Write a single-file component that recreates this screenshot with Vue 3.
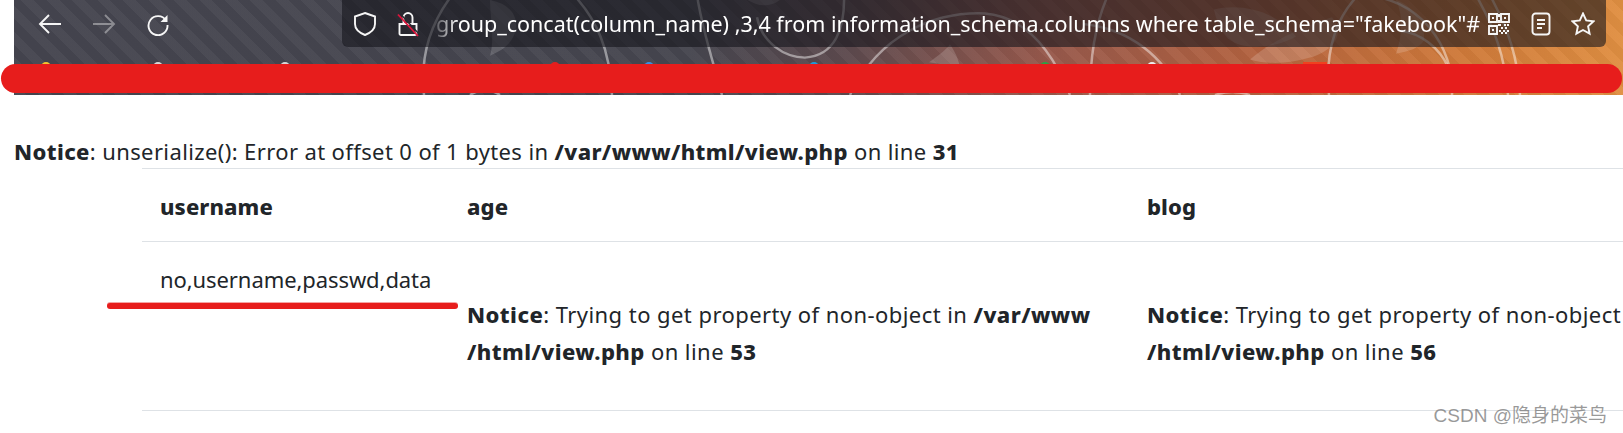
<script setup>
const columns = ['username', 'age', 'blog']
const swirls = [
  'M424 99 C420 60 430 25 452 -5',
  'M470 99 C480 92 490 92 500 99',
  'M574 -5 C596 20 610 50 612 99',
  'M697 -5 C702 30 712 60 722 99',
  'M757 18 C762 45 785 60 805 60 C835 58 845 30 844 -5',
  'M850 99 C880 35 935 12 985 14 C1030 18 1055 60 1070 99',
  'M1090 99 C1090 60 1095 25 1108 -5',
  'M1083 25 C1130 30 1165 60 1180 99',
  'M1329 99 C1325 55 1335 20 1358 -5',
  'M1358 -5 C1420 -5 1455 50 1452 99',
  'M1400 32 C1420 34 1440 50 1448 70',
  'M1490 -5 C1508 30 1518 60 1520 99',
  'M1476 -5 C1495 30 1505 60 1508 99',
  'M1215 99 C1225 95 1240 95 1250 99'
]
const leaves = [
  'M490 0 C505 3 517 12 516 28 C515 42 505 52 490 58 C495 40 490 18 490 0Z',
  'M745 -2 C755 6 770 10 782 -2Z',
  'M929 65 C938 58 946 52 950 46 C955 54 958 60 960 70Z',
  'M1214 10 C1245 2 1280 15 1296 38 C1280 48 1245 55 1228 40 C1220 32 1216 20 1214 10Z',
  'M1250 62 C1275 40 1310 25 1332 18 C1345 35 1335 52 1310 60 C1290 66 1270 68 1250 62Z',
  'M1396 0 C1412 5 1426 25 1424 42 C1420 50 1408 54 1396 56 C1402 38 1404 18 1396 0Z'
]
</script>

<template>
  <div class="page">
    <header class="chrome">
      <svg class="decor" viewBox="0 0 1609 99" preserveAspectRatio="none" aria-hidden="true">
        <g transform="translate(-14 0)">
          <path v-for="(d, i) in leaves" :key="'l' + i" :d="d" fill="#ffffff" fill-opacity="0.16" />
          <path v-for="(d, i) in swirls" :key="'s' + i" :d="d" fill="none" stroke="#ffffff" stroke-opacity="0.45" stroke-width="2.5" />
        </g>
      </svg>
      <nav class="nav">
        <svg class="icon" viewBox="0 0 24 24"><path d="M23 12H2M11 3l-9 9 9 9" /></svg>
        <svg class="icon dim" viewBox="0 0 24 24"><path d="M1 12h21M13 3l9 9-9 9" /></svg>
        <svg class="icon" viewBox="0 0 24 24"><path d="M20 8.500A9.500 9.500 0 1 0 21.500 13" /><path class="solid" d="M21.500 3v7h-7z" /></svg>
      </nav>
      <div class="address">
        <svg class="icon shield" viewBox="0 0 22 24"><path d="M11 1l10 3.500v7.500c0 5-4.500 8.800-10 11-5.500-2.200-10-6-10-11V4.500z" /></svg>
        <svg class="icon lock" viewBox="0 0 20 24">
          <path d="M5.500 12V5.500a4.500 4.500 0 0 1 9 0V12M1.500 12h17v9.500a1.500 1.500 0 0 1-1.500 1.500H3a1.500 1.500 0 0 1-1.500-1.500z" />
          <path class="gap" d="M1.500 1l20 21.500" />
          <path class="slash" d="M0 2.500L20 24" />
        </svg>
        <span class="url">group_concat(column_name) ,3,4 from information_schema.columns where table_schema="fakebook"#</span>
        <div class="tools">
          <svg class="icon qr" viewBox="0 0 24 24">
            <path d="M2 2h8v8H2zM14 2h8v8h-8zM2 14h8v8H2z" />
            <path class="solid" d="M5 5h2v2H5zM17 5h2v2h-2zM5 17h2v2H5zM11 2h2v3h-2zM11 8h2v3h-2zM11 12h3v2h-3zM17 12h2v2h-2zM20 12h2v2h-2zM14 15h2v2h-2zM18 15h2v2h-2zM12 18h2v2h-2zM16 18h2v2h-2zM20 18h2v2h-2zM14 20h2v2h-2zM18 20h2v2h-2z" />
          </svg>
          <svg class="icon doc" viewBox="0 0 24 24"><rect x="3.500" y="1.500" width="17" height="21" rx="3" /><path d="M8 8h8M8 12h8M8 16h5" /></svg>
          <svg class="icon star" viewBox="0 0 24 24"><path d="M12 1.500l3.200 6.900 7.300.9-5.400 5 1.500 7.300L12 18l-6.600 3.600 1.500-7.300-5.400-5 7.300-.9z" /></svg>
        </div>
      </div>
      <div class="bookmarks" aria-hidden="true">
        <i class="peek yellow"></i><i class="peek grey"></i><i class="peek grey2"></i><i class="peek red"></i>
        <i class="peek blue"></i><i class="peek cyan"></i><i class="peek green"></i><i class="peek pale"></i><i class="peek orange"></i>
      </div>
    </header>
    <div class="redact"></div>

    <p class="notice"><b>Notice</b>: unserialize(): Error at offset 0 of 1 bytes in <b>/var/www/html/view.php</b> on line <b>31</b></p>

    <div class="table">
      <div class="row head">
        <div v-for="c in columns" :key="c" class="cell">{{ c }}</div>
      </div>
      <div class="row body">
        <div class="cell first">
          no,username,passwd,data
          <span class="underline"></span>
        </div>
        <div class="cell second">
          <b>Notice</b>: Trying to get property of non-object in <b>/var/www<br />/html/view.php</b> on line <b>53</b>
        </div>
        <div class="cell second">
          <b>Notice</b>: Trying to get property of non-object<br /><b>/html/view.php</b> on line <b>56</b>
        </div>
      </div>
    </div>
    <div class="watermark">CSDN @隐身的菜鸟</div>
  </div>
</template>

<style scoped>
.page {
  position: relative;
  width: 1623px;
  height: 433px;
  overflow: hidden;
  background: #fff;
  color: #212529;
  font-family: "Noto Sans", "Open Sans", "Noto Sans CJK SC", sans-serif;
  font-size: 22px;
}
b {
  font-weight: 800;
}
.chrome {
  position: relative;
  margin-left: 14px;
  height: 95px;
  display: flex;
  align-items: flex-start;
  background:
    repeating-linear-gradient(45deg, rgba(255,255,255,0.03) 0 9px, rgba(0,0,0,0.03) 9px 18px),
    linear-gradient(90deg, #45454f 0, #46464f 42%, #5e4a4e 52%, #97594c 64%, #b5633f 78%, #cf7a3a 90%, #e08f42 100%);
}
.decor {
  position: absolute;
  inset: 0;
  width: 100%;
  height: 100%;
}
.icon {
  width: 24px;
  height: 24px;
  flex: none;
  fill: none;
  stroke: #f6f6f6;
  stroke-width: 1.900;
}
.solid {
  fill: #f6f6f6;
  stroke: none;
}
.dim {
  opacity: 0.4;
}
.nav {
  position: relative;
  width: 328px;
  height: 47px;
  padding-left: 24px;
  box-sizing: border-box;
  display: flex;
  align-items: center;
  gap: 30px;
}
.address {
  position: relative;
  flex: none;
  width: 1264px;
  height: 47px;
  box-sizing: border-box;
  padding-left: 12px;
  border-radius: 0 0 6px 6px;
  background: rgba(22, 22, 28, 0.6);
  display: flex;
  align-items: center;
  color: #fff;
}
.shield {
  width: 22px;
  height: 24px;
}
.lock {
  margin-left: 22px;
  width: 20px;
  height: 24px;
  overflow: visible;
}
.gap {
  stroke: #2a2a30;
  stroke-width: 1.500;
}
.slash {
  stroke: #e0143c;
  stroke-width: 1.800;
}
.url {
  margin-left: 18px;
  width: 1048px;
  flex: none;
  white-space: nowrap;
  font-size: 21.500px;
  color: #fff;
  -webkit-mask-image: linear-gradient(90deg, rgba(0,0,0,0.2) 0, #000 22px);
  mask-image: linear-gradient(90deg, rgba(0,0,0,0.2) 0, #000 22px);
}
.tools {
  margin-left: 3px;
  display: flex;
  align-items: center;
  gap: 18px;
}
.bookmarks {
  position: absolute;
  left: 0;
  right: 0;
  top: 60px;
  height: 6px;
}
.peek {
  position: absolute;
  top: 2px;
  width: 10px;
  height: 10px;
  border-radius: 50%;
}
.yellow { left: 27px; background: #f4c430; }
.grey { left: 139px; background: #d8d8d8; }
.grey2 { left: 266px; background: #d8d8d8; }
.red { left: 536px; background: #e02020; }
.blue { left: 630px; background: #3a8fe0; }
.cyan { left: 795px; background: #1e9bd8; }
.green { left: 1026px; background: #2ea043; }
.pale { left: 1133px; background: #eee; }
.orange { left: 1289px; width: 24px; border-radius: 0; background: #f0401f; }
.redact {
  position: absolute;
  left: 1px;
  top: 64px;
  width: 1621px;
  height: 29px;
  border-radius: 15px;
  background: #e71d1c;
}
.notice {
  margin: 0;
  padding: 40px 0 0 14px;
  height: 33px;
  line-height: 33px;
  white-space: nowrap;
  letter-spacing: 0.380px;
}
.table {
  margin-left: 142px;
  border-top: 1px solid #dee2e6;
}
.row {
  display: grid;
  grid-template-columns: 307px 680px 1fr;
  border-bottom: 1px solid #dee2e6;
}
.head {
  height: 72px;
  align-items: center;
  font-weight: 800;
  letter-spacing: 0.100px;
}
.head .cell {
  padding-top: 2px;
}
.body {
  height: 168px;
  white-space: nowrap;
}
.cell {
  padding-left: 18px;
  line-height: 37px;
}
.first {
  position: relative;
  padding-top: 19px;
  letter-spacing: -0.080px;
}
.second {
  padding-top: 54px;
  letter-spacing: 0.440px;
}
.underline {
  position: absolute;
  left: -35px;
  top: 61px;
  width: 351px;
  height: 6px;
  border-radius: 3px;
  background: #e71d1c;
  box-shadow: 0 -1px 0 rgba(231, 29, 28, 0.4);
}
.watermark {
  position: absolute;
  right: 16px;
  bottom: 5px;
  font-family: "Liberation Sans", "Noto Sans CJK SC", sans-serif;
  font-size: 19px;
  line-height: 24px;
  color: rgba(120, 120, 120, 0.75);
}
</style>
